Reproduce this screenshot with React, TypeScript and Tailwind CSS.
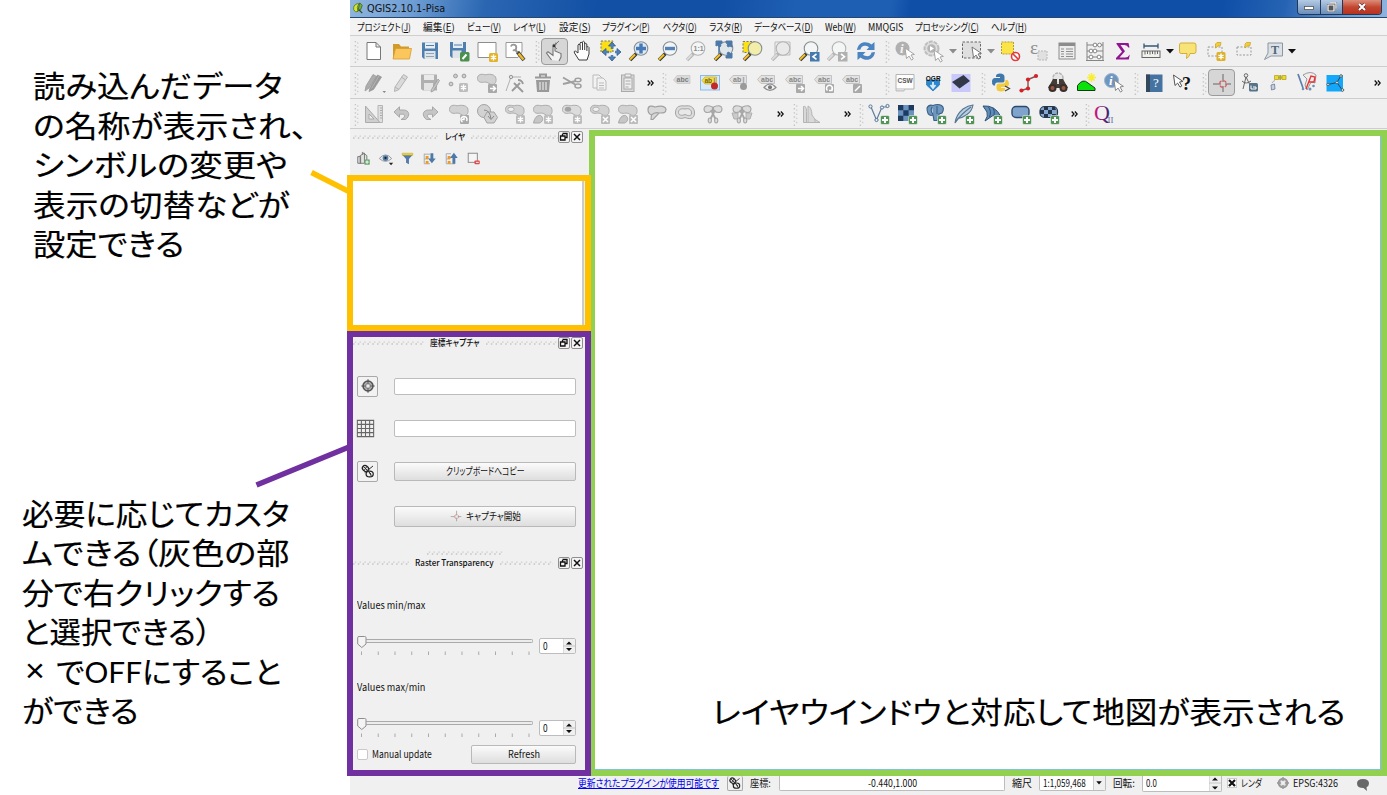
import React, { useLayoutEffect, useRef } from "react";

const JP = "font-['Noto_Sans_CJK_JP',sans-serif]";

/* Text squeezed or stretched horizontally to the width of its box. */
function Fit({ className, children }: { className: string; children: React.ReactNode }) {
  const outer = useRef<HTMLSpanElement>(null);
  const inner = useRef<HTMLSpanElement>(null);
  useLayoutEffect(() => {
    if (!outer.current || !inner.current) return;
    const s = outer.current.clientWidth / inner.current.offsetWidth;
    inner.current.style.transform = `scaleX(${s})`;
  }, []);
  return (
    <span ref={outer} className={"block shrink-0 whitespace-nowrap " + className}>
      <span ref={inner} className="inline-block origin-left">
        {children}
      </span>
    </span>
  );
}

/* ---------- icon parts ---------- */
const Star = ({ x = 13, y = 13, c = "#bcbcbc" }: { x?: number; y?: number; c?: string }) => (
  <g>
    <rect x={x} y={y} width="9" height="9" rx="1.5" fill={c} />
    <path
      d={`M${x + 4.5} ${y + 1.5}v6M${x + 1.9} ${y + 3}l5.2 3M${x + 1.9} ${y + 6}l5.2 -3`}
      stroke="#fff"
      strokeWidth="1.4"
    />
  </g>
);
const Cross = () => (
  <g>
    <rect x="13" y="13" width="9" height="9" rx="1" fill="#bcbcbc" />
    <path d="M15 15l5 5M20 15l-5 5" stroke="#fff" strokeWidth="1.5" />
  </g>
);
const Plus = () => (
  <g>
    <rect x="13.5" y="13.5" width="9" height="9" rx="1.5" fill="#4f9456" stroke="#fff" strokeWidth=".5" />
    <path d="M18 15v6M15 18h6" stroke="#fff" strokeWidth="2" />
  </g>
);
const Arr = ({ d = "M15 17.5h5M18 15l2.5 2.5L18 20" }: { d?: string }) => (
  <g>
    <rect x="13" y="13" width="9" height="9" rx="1" fill="#a9a9a9" />
    <path d={d} stroke="#fff" strokeWidth="1.5" fill="none" />
  </g>
);
const Mag = ({ gray = false, fill = "#f4f6f6", children }: { gray?: boolean; fill?: string; children?: React.ReactNode }) => (
  <g>
    <path d="M9.5 14.5L3 21" stroke={gray ? "#b5b5b5" : "#333"} strokeWidth="3.6" />
    <path d="M8 15.5L3 20.5" stroke={gray ? "#dadada" : "#f3c221"} strokeWidth="2.2" />
    <circle cx="14" cy="9.5" r="6.8" fill={fill} stroke={gray ? "#b2b2b2" : "#858f92"} strokeWidth="1.1" />
    {children}
  </g>
);
const Blob = ({ f = "#d2d2d2", hole = false }: { f?: string; hole?: boolean }) => (
  <g>
    <path
      d="M2.500 7.500C2.500 3.500 6 2.500 10 3.800C14 3 18.500 2.800 20.500 6C21.800 9 21 13 18 13.500C14 14 13.500 10.800 10 11C6 12 2.500 11 2.500 7.500Z"
      fill={f}
      stroke="#acacac"
      strokeWidth="1"
    />
    {hole && <ellipse cx="8" cy="7.300" rx="3.200" ry="2.200" fill="#efefef" stroke="#acacac" strokeWidth=".9" />}
  </g>
);
const Blob2 = () => <path d="M2.500 21C3.500 16 6 13 9.500 13.500C13 15.500 12 20 8.500 21Z" fill="#c6c6c6" stroke="#a6a6a6" />;
const Cursor = ({ x = 12, y = 9, f = "#fff", s = "#a5a5a5" }: { x?: number; y?: number; f?: string; s?: string }) => (
  <path d={`M${x} ${y}l1.500 10.500 2.600 -2.400 2.400 4 1.800 -1.200 -2.300 -3.900 3.400 -.6Z`} fill={f} stroke={s} strokeWidth="1" />
);
const Tag = ({ t = "abc" }: { t?: string }) => (
  <g>
    <path d="M2.500 8.500L6 4.500H19.500V12.500H6Z" fill="#e2e2e2" stroke="#b9b9b9" strokeWidth=".8" />
    <text x="6" y="11" fontSize="7" fontWeight="bold" fill="#868686" className="font-['Liberation_Sans',sans-serif]">
      {t}
    </text>
  </g>
);
const Scissors = () => (
  <g fill="#dcdcdc" stroke="#a6a6a6" strokeWidth="1.1">
    <path d="M11.500 9Q3 13 3 6.500 4 2 11.500 5ZM12.500 9Q21 13 21 6.500 20 2 12.500 5Z" />
    <path d="M14 8L9.500 17M10 8L14.500 17" strokeWidth="1.800" />
    <ellipse cx="8.800" cy="18.500" rx="1.600" ry="2.500" />
    <ellipse cx="15.200" cy="18.500" rx="1.600" ry="2.500" />
  </g>
);

const icons: Record<string, React.ReactNode> = {
  new: <path d="M5 3.500H14L18.500 8V20.500H5ZM14 3.500V8H18.500" fill="#fff" stroke="#777" />,
  open: (
    <g>
      <path d="M3 19V5H9L11 7.500H19V19Z" fill="#d29a2b" />
      <path d="M3 20L5.500 9.500H21.500L19.500 20Z" fill="#fbc75c" stroke="#d89d30" strokeWidth=".8" />
    </g>
  ),
  save: (
    <g>
      <path d="M4 3.500H20V20H6L4 18Z" fill="#4f7fae" />
      <rect x="7" y="3.500" width="10" height="6" fill="#e8edf1" />
      <path d="M8 6.500h8" stroke="#4f7fae" />
      <rect x="6.500" y="12" width="11" height="8" fill="#dfe4e8" />
      <path d="M8 14.500h8M8 17.500h8" stroke="#8ea4b8" />
    </g>
  ),
  saveAs: (
    <g>
      <path d="M3 3H19V19H5L3 17Z" fill="#4f7fae" />
      <rect x="6" y="3" width="10" height="6" fill="#e8edf1" />
      <path d="M7 6h8" stroke="#4f7fae" />
      <rect x="5.500" y="11.500" width="9" height="7.500" fill="#dfe4e8" />
      <rect x="13" y="13" width="9.500" height="9.500" rx="1.500" fill="#4c9050" />
      <path d="M15.500 20L19.500 15.500" stroke="#fff" strokeWidth="2" />
    </g>
  ),
  composer: (
    <g>
      <path d="M3 3.500H21V15L17 18.500H3Z" fill="#fff" stroke="#8d8d8d" />
      <Star x={14} y={14} c="#e3b32c" />
    </g>
  ),
  manager: (
    <g>
      <path d="M3 3.500H19V13L15 18.500H3Z" fill="#fff" stroke="#999" />
      <path d="M14.500 13l6.500 8" stroke="#444" strokeWidth="3.800" />
      <path d="M15.500 14.500l5 6" stroke="#efbc28" strokeWidth="2.400" />
      <circle cx="10.500" cy="8.500" r="2.800" stroke="#979797" strokeWidth="1.800" strokeDasharray="13 4.600" strokeDashoffset="8" />
      <path d="M12 10.500l2.500 3" stroke="#979797" strokeWidth="2" />
    </g>
  ),
  touch: (
    <g>
      <path d="M9.500 21L4.500 14l1.500-1.300L11 16.500V6q1-1.200 2 0V12l6 2.500V18l-2 4" fill="#f4f4f4" stroke="#777" strokeWidth="1.100" />
      <path d="M12 7l5-5M12 7l3 3" stroke="#777" />
      <circle cx="12" cy="7" r="1.300" fill="#333" />
      <circle cx="14" cy="4.500" r="1" fill="#777" />
    </g>
  ),
  pan: (
    <path
      d="M8 21L3.500 14q-1-2 .8-2L7 14V6q.8-1.800 2 0V4q1-1.800 2.300 0V3q1.200-1.500 2.300 0V5q1.200-1.300 2.200 0V8q1.500-1.200 2.200.5V15l-2 6Z M9.200 6v5M11.500 4v7M13.700 5v6M15.900 8v4"
      fill="#fff"
      stroke="#3d3d3d"
      strokeWidth="1"
    />
  ),
  panSel: (
    <g>
      <rect x="2" y="2" width="12" height="11" fill="#fbdf12" stroke="#777" strokeDasharray="2 1.500" />
      <path d="M13 3l3.500 4h-7ZM13 22l3.500-4h-7ZM3 13l4-3.500v7ZM22 13l-4-3.500v7Z" fill="#4d7fb8" stroke="#31598b" strokeWidth=".8" />
      <path d="M13 6v4M13 16v3M6 13h4M16 13h3" stroke="#4d7fb8" strokeWidth="2.500" />
    </g>
  ),
  zin: (
    <Mag fill="#dfe9f3">
      <path d="M14 4.500v10M9 9.500h10" stroke="#4779b6" strokeWidth="3.400" />
    </Mag>
  ),
  zout: (
    <Mag>
      <path d="M9 9.500h10" stroke="#5583b8" strokeWidth="3.400" />
    </Mag>
  ),
  z11: (
    <Mag gray>
      <text x="9.500" y="12" fontSize="7" fontWeight="bold" fill="#8a8a8a" className="font-['Liberation_Sans',sans-serif]">
        1:1
      </text>
    </Mag>
  ),
  zfull: (
    <g>
      <Mag fill="#dfe6ea" />
      <path d="M4 2h6v2l-2 1 1 2-2 1-1-2-2 1ZM14 2h6v6l-2-1-2 1-1-2 1-1-2-1ZM20 19h-6v-2l2-1-1-2 2-1 1 2 2-1Z" fill="#4e78a8" stroke="#4e78a8" />
      <path d="M7 6v9" stroke="#4e78a8" strokeWidth="1.500" />
    </g>
  ),
  zsel: (
    <g>
      <rect x="2" y="2.500" width="12" height="11" fill="#fbe016" stroke="#777" strokeDasharray="2 1.500" />
      <Mag fill="#f3edaa" />
    </g>
  ),
  zlayer: (
    <g>
      <path d="M6 3h15v13H6Z" fill="#eee" stroke="#bbb" />
      <Mag gray fill="#e9e9e9" />
    </g>
  ),
  zlast: (
    <g>
      <Mag />
      <rect x="13" y="13" width="9.500" height="9.500" fill="#4679ac" />
      <path d="M19.500 15l-3.500 2.700 3.500 2.700" stroke="#fff" strokeWidth="1.600" fill="none" />
    </g>
  ),
  znext: (
    <g>
      <Mag gray />
      <rect x="13" y="13" width="9.500" height="9.500" fill="#b0b0b0" />
      <path d="M16 15l3.500 2.700-3.500 2.700" stroke="#fff" strokeWidth="1.600" fill="none" />
    </g>
  ),
  refresh: (
    <g fill="#4b84c1">
      <path d="M3 11C4 3 12 1 17.500 5.500L20.500 3V11H12.500L15 8.300C11 5.500 7 7 6.500 10.500Z" />
      <path d="M21 13C20 21 12 23 6.500 18.500L3.500 21V13H11.500L9 15.700C13 18.500 17 17 17.500 13.500Z" />
    </g>
  ),
  info: (
    <g>
      <circle cx="9.500" cy="9.500" r="7" fill="#b0b0b0" />
      <text x="7" y="14" fontSize="13" fontStyle="italic" fontWeight="bold" fill="#f4f4f4" className="font-['Liberation_Serif',serif]">i</text>
      <Cursor x={12} y={9} />
    </g>
  ),
  gear: (
    <g>
      <circle cx="10.500" cy="9.500" r="7" fill="#dedede" stroke="#bdbdbd" strokeWidth="2" strokeDasharray="4 1" />
      <circle cx="10.500" cy="9.500" r="4.200" fill="#b4b4b4" />
      <path d="M9 7l4 2.500-4 2.500Z" fill="#fff" />
      <Cursor x={13} y={11} />
    </g>
  ),
  select: (
    <g>
      <rect x="2.500" y="3" width="18" height="16" fill="#dfdfdf" stroke="#686868" strokeDasharray="2.500 1.500" />
      <Cursor x={12} y={8} s="#777" />
    </g>
  ),
  deselect: (
    <g>
      <rect x="3.500" y="3" width="12" height="12" fill="#fbe44a" stroke="#b79e33" strokeDasharray="2 1" />
      <circle cx="17.500" cy="17.500" r="4" fill="#fff" stroke="#e03b3b" strokeWidth="1.600" />
      <path d="M15 15l5 5" stroke="#e03b3b" strokeWidth="1.600" />
    </g>
  ),
  eps: (
    <g>
      <text x="4" y="15" fontSize="19" fill="#8f8f8f" className="font-['Liberation_Serif',serif]">ε</text>
      <rect x="12" y="12" width="9" height="9" fill="#e0e0e0" stroke="#b8b8b8" strokeDasharray="2 1" />
    </g>
  ),
  table: (
    <g>
      <rect x="4" y="4" width="16" height="16" fill="#ececec" stroke="#8c8c8c" />
      <rect x="4" y="4" width="16" height="3" fill="#8c8c8c" />
      <path d="M6 10h3M11 10h7M6 12.500h3M11 12.500h7M6 15h3M11 15h7M6 17.500h3M11 17.500h7" stroke="#8f8f8f" />
    </g>
  ),
  abacus: (
    <g fill="#fff" stroke="#858585">
      <path d="M4 3v18M20 3v18M3 21.500h18M4 6h16M4 12h16M4 18h16" fill="none" />
      <circle cx="12" cy="6" r="1.900" /><circle cx="16.500" cy="6" r="1.900" />
      <circle cx="8" cy="12" r="1.900" /><circle cx="12" cy="12" r="1.900" />
      <circle cx="8" cy="18" r="1.900" /><circle cx="16" cy="18" r="1.900" />
    </g>
  ),
  sigma: <path d="M5.500 4H17.500L18.500 8.500H17.300Q16.500 6 13.500 6H9.500L14 12.200 8.500 18.500H14.500Q17.500 18 18.800 15.500L17.800 20.500H5V19L11 12.700 5.500 5Z" fill="#911491" />,
  measure: (
    <g>
      <path d="M5 7h14M5 4.500v5M19 4.500v5" stroke="#355775" strokeWidth="1.300" />
      <rect x="3" y="12" width="18" height="6.500" fill="#f2f2ed" stroke="#666" />
      <path d="M6 12v3.500M8.500 12v3M11 12v3.500M13.500 12v3M16 12v3.500M18.500 12v3" stroke="#666" />
    </g>
  ),
  tip: (
    <path d="M5 4H18Q20 4 20 6V12.500Q20 14.500 18 14.500H14Q13.500 18 10.500 19.500L11 14.500H5Q3.500 14.500 3.500 12.500V6Q3.500 4 5 4Z" fill="#f8e377" stroke="#d3ae3c" />
  ),
  bmNew: (
    <g>
      <path d="M4 8H18V17H4Z" fill="none" stroke="#999" strokeDasharray="2 1.500" />
      <path d="M11.500 9V5L13 3.500H17L16.500 6.500 14 7Z" fill="#f3cf35" stroke="#c59e21" strokeWidth=".7" />
      <Star x={12.500} y={13} c="#deb02b" />
    </g>
  ),
  bm: (
    <g>
      <path d="M5 8H19V16H5Z" fill="none" stroke="#999" strokeDasharray="2 1.500" />
      <path d="M13 9V5L14.500 3.500H18.500L18 6.500 15.500 7Z" fill="#f3cf35" stroke="#c59e21" strokeWidth=".7" />
    </g>
  ),
  annot: (
    <g>
      <path d="M6 4H20.500V17H9L2.500 20.500 6 14Z" fill="#dbe1e7" stroke="#8e979f" />
      <text x="9" y="14.500" fontSize="12" fontWeight="bold" fill="#526575" className="font-['Liberation_Serif',serif]">T</text>
    </g>
  ),
  pencils: (
    <g stroke="#9a9a9a" strokeWidth=".8">
      <path d="M4 15L11 3.500l3.500 2L7 17l-4 3Z" fill="#adadad" />
      <path d="M8 17L15.500 4l4 2L11.500 18.500l-4.500 2Z" fill="#999" />
      <path d="M9.500 17.500L17 5" stroke="#bdbdbd" />
      <path d="M20.500 20h3.500l-1.700 2Z" fill="#888" stroke="none" />
    </g>
  ),
  pencil: <path d="M5 16L13.500 3.500 17.500 6 9 18.500 4.500 20.500ZM5 16l4 2.500M11.500 6l4 3" fill="#dadada" stroke="#b3b3b3" />,
  saveG: (
    <g>
      <path d="M3 3.500H19V19.500H5L3 18Z" fill="#b0b0b0" />
      <rect x="6" y="4" width="10" height="5" fill="#eaeaea" />
      <rect x="6" y="12" width="9" height="7.500" fill="#e4e4e4" />
      <path d="M20 8l-6.500 10.500-.5 2.500 2.500-1L21.500 9.500Z" fill="#c4c4c4" stroke="#9c9c9c" strokeWidth=".8" />
    </g>
  ),
  pts: (
    <g fill="#cfcfcf" stroke="#9d9d9d">
      <circle cx="4" cy="13" r="1.900" /><circle cx="8.500" cy="5" r="1.900" /><circle cx="17" cy="5" r="1.900" />
      <g stroke="none"><Star x={12} y={12} /></g>
    </g>
  ),
  move: (<g><Blob /><Arr /></g>),
  node: (
    <g>
      <path d="M3 20L8 6H18" stroke="#b0b0b0" fill="none" />
      <circle cx="8" cy="6" r="1.700" fill="#ddd" stroke="#999" />
      <path d="M9 20L17 12M11 12l9 9M15 9q4 0 5 4" stroke="#9a9a9a" strokeWidth="1.900" />
    </g>
  ),
  trash: (
    <g>
      <path d="M5 9H19L18 21H6Z" fill="#999" />
      <path d="M4 6.500h16M9 5.500V3.500h6V5.500" stroke="#999" strokeWidth="2" fill="none" />
      <path d="M9 11v8M12 11v8M15 11v8" stroke="#e8e8e8" strokeWidth="1.200" />
    </g>
  ),
  cut: (
    <g stroke="#a0a0a0" fill="none" strokeWidth="1.500">
      <path d="M3 6.500L16 14M3 13L16 10" strokeWidth="2" />
      <ellipse cx="18" cy="15" rx="3" ry="2" />
      <ellipse cx="18" cy="9" rx="3" ry="1.700" />
    </g>
  ),
  copy: (
    <g fill="#f2f2f2" stroke="#bbb">
      <path d="M5 4h6l3 3v10H5Z" />
      <path d="M9 7h6l3 3v9H9Z" />
      <path d="M11 12h5M11 14.500h5M11 17h5" />
    </g>
  ),
  paste: (
    <g fill="#eee" stroke="#aaa">
      <rect x="5.500" y="4" width="12.500" height="16.500" fill="#d9d9d9" />
      <rect x="8" y="7" width="8" height="11" />
      <path d="M9 3h6v3H9ZM9.500 10h5M9.500 13h5M9.500 16h3" />
    </g>
  ),
  lab: (
    <g>
      <path d="M3.500 9L7 4.500H20V12.500H7Z" fill="#dadada" stroke="#c4c4c4" strokeWidth=".7" />
      <text x="6.500" y="11" fontSize="7" fontWeight="bold" fill="#7d7d7d" className="font-['Liberation_Sans',sans-serif]">abc</text>
    </g>
  ),
  labPin: (
    <g>
      <rect x="2.500" y="4.500" width="19" height="14.500" fill="#d8eafa" stroke="#8cbae7" />
      <path d="M4 9.500L7 6H18.500V13H7Z" fill="#f8df3c" stroke="#c7ab2b" strokeWidth=".7" />
      <text x="6.500" y="12" fontSize="6.500" fontWeight="bold" fill="#6d6424" className="font-['Liberation_Sans',sans-serif]">ab</text>
      <path d="M16.500 7v7" stroke="#999" strokeWidth="1.500" />
      <circle cx="16.500" cy="15" r="3.500" fill="#c22a2a" />
    </g>
  ),
  labPinG: (<g><Tag t="ab" /><path d="M16.500 6v8" stroke="#aaa" strokeWidth="1.500" /><circle cx="16.500" cy="15.500" r="3.500" fill="#9a9a9a" /></g>),
  labEye: (<g><Tag /><path d="M9 16.500q6-7 12 0-6 6-12 0Z" fill="#f0f0f0" stroke="#8c8c8c" strokeWidth="1.200" /><circle cx="15" cy="16.300" r="2" fill="#777" /></g>),
  labMove: (<g><Tag /><Arr /></g>),
  labRot: (<g><Tag /><Arr d="M15.500 19.500a3 3 0 1 1 4 0M20 16.500v3h-3" /></g>),
  labEdit: (<g><Tag /><Arr d="M15 20l5-5" /></g>),
  csw: (
    <g>
      <path d="M3 3.500h18v14.500H3Z" fill="#fdfdfd" stroke="#b4b4b4" />
      <path d="M3 18v2h8l1-2" fill="#ddd" stroke="#b4b4b4" strokeWidth=".8" />
      <text x="4.500" y="12" fontSize="6.500" fontWeight="bold" fill="#555" className="font-['Liberation_Sans',sans-serif]">CSW</text>
    </g>
  ),
  ogr: (
    <g>
      <path d="M5.500 9v5l6.500 6 6.500-6V9Z" fill="#2b87cf" stroke="#1b66a2" strokeWidth=".6" />
      <path d="M12 11v6M9.500 14l2.500 3 2.500-3" stroke="#d6ecfa" strokeWidth="1.800" fill="none" />
      <text x="4.800" y="10" fontSize="6.500" fontWeight="bold" fill="#111" className="font-['Liberation_Sans',sans-serif]">OGR</text>
    </g>
  ),
  black: (<g><rect x="2.500" y="3" width="19" height="18" fill="#c8c8fb" /><path d="M3 11L14.500 4 21 10 10.500 17.500Z" fill="#333848" /></g>),
  python: (
    <g>
      <path d="M11 2.500Q15.500 2.500 15.500 6V10Q15.500 11.500 13 11.500H8.500Q6 11.500 6 14.500H4.500Q2.500 13 3 10 3.500 7 6 7H11V6H7V5Q7 2.500 11 2.500Z" fill="#3e78ad" />
      <path d="M12 20.500Q7.500 20.500 7.500 17V14.500Q7.500 12.500 10 12.500H14Q16.500 12.500 16.500 9H18.500Q20.500 11 20 13.500 19.500 16 17 16H12V17H16V18Q16 20.500 12 20.500Z" fill="#f3cb3e" />
      <path d="M16 15l4.500 2.500-4.500 2.500" stroke="#444" strokeWidth="1.200" fill="none" />
    </g>
  ),
  road: (
    <g>
      <path d="M4 19.500L11 17.500V8.500L19.500 5" stroke="#8b4f50" fill="none" strokeWidth="1.400" />
      <g fill="#d42026"><circle cx="4.500" cy="19.500" r="2.100" /><circle cx="11" cy="17.500" r="2.100" /><circle cx="11" cy="8.500" r="2.100" /><circle cx="19" cy="5" r="2.100" /></g>
    </g>
  ),
  bino: (
    <g>
      <circle cx="12" cy="7" r="5" fill="#e6e6e6" stroke="#b4b4b4" strokeWidth="1.500" strokeDasharray="3 1" />
      <path d="M7 8h4v5h2V8h4l5 9H2Z" fill="#443d37" />
      <circle cx="6.500" cy="17" r="4" fill="#372f2b" /><circle cx="17.500" cy="17" r="4" fill="#372f2b" />
      <circle cx="6.500" cy="17" r="2" fill="#995548" /><circle cx="17.500" cy="17" r="2" fill="#995548" />
    </g>
  ),
  hill: (
    <g>
      <path d="M3.500 19.500V14.500Q9 7 14 12L21 17V19.500Z" fill="#0be20b" stroke="#143914" />
      <path d="M17.500 2v9M13 6.500h9M14.500 3.500l6 6M20.500 3.500l-6 6" stroke="#f9ed31" strokeWidth="1.500" />
    </g>
  ),
  infoB: (
    <g>
      <circle cx="9.500" cy="9.500" r="7" fill="#6f96c0" stroke="#9db4cc" />
      <text x="7" y="14" fontSize="13" fontStyle="italic" fontWeight="bold" fill="#fff" className="font-['Liberation_Serif',serif]">i</text>
      <Cursor x={12} y={9} s="#888" />
    </g>
  ),
  help: (
    <g>
      <rect x="4" y="3.500" width="16.500" height="17.500" fill="#4473a1" />
      <rect x="4" y="3.500" width="4" height="17.500" fill="#33485c" />
      <text x="11" y="16" fontSize="13" fill="#fff" className="font-['Liberation_Serif',serif]">?</text>
    </g>
  ),
  what: (
    <g>
      <Cursor x={3.500} y={4} s="#555" />
      <text x="12" y="19" fontSize="18" fontWeight="bold" fill="#111" className="font-['Liberation_Serif',serif]">?</text>
    </g>
  ),
  crossR: (
    <g>
      <path d="M13 3v8M13 15v6M3 13h8M15 13h6" stroke="#666" />
      <circle cx="13" cy="13" r="3.500" fill="none" stroke="#dc5b5b" strokeDasharray="3.500 2" strokeWidth="1.300" />
    </g>
  ),
  compass: (
    <g>
      <circle cx="8" cy="4.500" r="1.800" fill="none" stroke="#666" />
      <path d="M8 6L5 18M8 6l4 8M4 10q4 4 9 0" stroke="#666" fill="none" />
      <rect x="11" y="12" width="9" height="8.500" rx="1.500" fill="#567288" />
      <path d="M13 14.500v3.500h5v-2h-3" stroke="#fff" fill="none" />
    </g>
  ),
  sat: (
    <g>
      <path d="M8.500 4.500h4v4h-4ZM16 4.500h4v4h-4Z" fill="#eddb29" stroke="#aa9a25" strokeWidth=".7" />
      <path d="M12 6.500h4M14.200 4v5" stroke="#b9aa25" strokeWidth="1.800" />
      <path d="M6 12q1-2 3-2.500" stroke="#aaa" fill="none" />
      <path d="M5 14l3.500-1 .5 5-3.500 1Z" fill="#b9d3ea" stroke="#778" strokeWidth=".8" />
    </g>
  ),
  clip: (
    <g>
      <path d="M3 3L8 17" stroke="#5d7fae" strokeWidth="1.700" />
      <path d="M8 4q8-5 13 0l-1 8q-4-2-5 1l-3 6-2-5 2-6Z" fill="#eee" stroke="#999" />
      <path d="M11 18L16 5l4 1-1 5-5 0" stroke="#ea3333" strokeWidth="1.400" fill="none" />
      <circle cx="8" cy="18" r="1.300" fill="#6d91bb" /><circle cx="15" cy="18" r="1.500" fill="#6d91bb" /><circle cx="18.500" cy="15" r="1.300" fill="#6d91bb" />
    </g>
  ),
  voronoi: (
    <g>
      <rect x="3.500" y="4" width="16.500" height="16.500" fill="#14a8fb" />
      <path d="M18 4.500L14 11.500 5 13.500M14 11.500l5.500 8" stroke="#23435c" strokeWidth="1" fill="none" />
      <g fill="#eee" stroke="#566"><circle cx="18" cy="5" r="1.300" /><circle cx="14" cy="11.500" r="1.300" /><circle cx="5" cy="13.500" r="1.200" /><circle cx="19.500" cy="19" r="1.300" /></g>
    </g>
  ),
  setsq: (
    <g>
      <path d="M3.500 4V20.500H18Z M7 12v5h5Z" fill="#cfcfcf" stroke="#ababab" fillRule="evenodd" />
      <path d="M16 3.500H20.500V20.500H18L16 18Z" fill="#e0e0e0" stroke="#b5b5b5" />
      <path d="M18 6h2M18 8.500h2M18 11h2M18 13.500h2M18 16h2" stroke="#aaa" />
    </g>
  ),
  undo: <path d="M4 10L9.500 4.800V8H13.500C19.500 8 20.500 14 15.500 17.500L11 17.500C16 15 15.500 12.200 12.500 12.200H9.500V15.200Z" fill="#c6c6c6" stroke="#a3a3a3" strokeWidth=".9" />,
  redo: <path d="M20 10L14.500 4.800V8H10.500C4.500 8 3.500 14 8.500 17.500L13 17.500C8 15 8.500 12.200 11.500 12.200H14.500V15.200Z" fill="#c6c6c6" stroke="#a3a3a3" strokeWidth=".9" />,
  rot: (<g><Blob /><Arr d="M15.500 20a3 3 0 1 1 4-1M17 15.500v2h-2" /></g>),
  simp: (
    <g fill="#d2d2d2" stroke="#a3a3a3">
      <circle cx="9" cy="9" r="6.500" />
      <path d="M12 10h7l3.500 5.500-3.500 5.500h-7L9 15.500Z" />
      <path d="M9 8Q15 8 16 17M13 14l3 3.500 3-3.500" stroke="#8a8a8a" fill="none" />
    </g>
  ),
  ring: (<g><Blob hole /><Star /></g>),
  part: (<g><Blob /><Blob2 /><Star /></g>),
  fill: (<g><Blob f="#dcdcdc" /><ellipse cx="8" cy="7.300" rx="3.200" ry="2.500" fill="#a3a3a3" /><Star /></g>),
  delRing: (<g><Blob hole /><Cross /></g>),
  delPart: (<g><Blob /><Blob2 /><Cross /></g>),
  reshape: (
    <path
      d="M3 7.500C3 3.500 7 3.500 10 5 14 4 20 3.500 21 7.500 21 11.500 17 11 14 11L8 17.500 6 17.500 6.500 13Q3 11.500 3 7.500ZM6.500 13Q10 9.500 14 11"
      fill="#d8d8d8"
      stroke="#a0a0a0"
      strokeWidth="1.200"
    />
  ),
  offset: (
    <g fill="#dcdcdc" stroke="#a3a3a3"><path d="M2.500 11C2.500 3.500 8 3.500 12 4 17 3 21.500 5 21.500 11 21.500 18 15 17 12 15.500 8 17.500 2.500 16 2.500 11Z" /><path d="M5.500 10.500C5.500 6.500 9 6.500 12 7 16 6 18.500 7.500 18.500 11 18.500 14.500 15 14 12 12.500 9 14 5.500 13.500 5.500 10.500Z" fill="#e8e8e8" /></g>
  ),
  split: <Scissors />,
  splitP: (<g><path d="M2 11h6v6H4ZM22 11h-6v6h4Z" fill="#cacaca" stroke="#b0b0b0" /><Scissors /></g>),
  hist: <path d="M3.500 20.500V4.500q3-1 3 5V20.500M8 20.500V4q3.500 1 4 9 2 5 8 7.500H3.500M15 17v3" fill="#d9d9d9" stroke="#b5b5b5" strokeWidth="1" />,
  vec: (
    <g>
      <path d="M4 5L9.500 18 15 5h6" stroke="#5e7d9b" strokeWidth="1.200" fill="none" />
      <g fill="#e8eef3" stroke="#557795"><circle cx="3.500" cy="4.500" r="1.600" /><circle cx="9.500" cy="18" r="1.600" /><circle cx="15" cy="5.500" r="1.600" /><circle cx="20.500" cy="4" r="1.600" /></g>
      <Plus />
    </g>
  ),
  raster: (
    <g>
      <rect x="3" y="3" width="16" height="16" fill="#1d3a5f" />
      <path d="M8.300 3h5.300v5.300H8.300ZM3 8.300h5.300v5.400H3ZM13.600 8.300H19v5.400h-5.400ZM8.300 13.700h5.300V19H8.300Z" fill="#6a93bf" />
      <Plus />
    </g>
  ),
  pg: (
    <g>
      <path d="M3 6Q5 2 9 3.500 14 1.500 17.500 3.500 21 6 18 11L15 12V15L13 18.500H10L9 13 7 13.500Q3 13 3 6ZM8 5Q6 9 9 12M13 4v8" fill="#6e97c0" stroke="#3a5f85" strokeWidth="1.100" />
      <Plus />
    </g>
  ),
  feather: (<g><path d="M3 21Q4 13 11 7 16 3.500 21 3 20 9 15 12.500 10 16 6 16.500ZM3 21Q9 12 19 5" fill="#b9cfe2" stroke="#567693" strokeWidth="1.100" /><Plus /></g>),
  mssql: (<g><path d="M3 4Q15 3 20.500 14L20 18 13 13.500 5 19Q8.500 14 7 10ZM8 4.500Q12 9 9.500 15M13 6Q15 9 14 13" fill="#5f8cb9" stroke="#2e4f73" /><Plus /></g>),
  oracle: (<g><rect x="3" y="4.500" width="17" height="11" rx="4" fill="#7fa3cd" stroke="#29496d" strokeWidth="1.400" /><Plus /></g>),
  georaster: (
    <g>
      <rect x="3" y="4.500" width="17.500" height="11" rx="4.500" fill="#86a8cf" stroke="#25384f" strokeWidth="1.200" />
      <path d="M7 5h4v3H7ZM15 5h3l1 3h-4ZM3 8h4v4H3ZM11 8h4v4h-4ZM7 12h4v3H7ZM15 12h4l-1 3h-3Z" fill="#22354d" />
      <Plus />
    </g>
  ),
  qii: (
    <g>
      <text x="1" y="18" fontSize="22" fill="url(#q)" className="font-['Liberation_Serif',serif]">Q</text>
      <text x="14.500" y="21" fontSize="9" fill="#6c6ca0" className="font-['Liberation_Serif',serif]">II</text>
      <defs><linearGradient id="q"><stop offset="0" stopColor="#e0107f" /><stop offset="1" stopColor="#2c2673" /></linearGradient></defs>
    </g>
  ),
  addGroup: (<g><path d="M6 10h3v7H6ZM8.500 9L13 6.500V17H8.500ZM10.800 8V5.500L15.500 9v5" fill="#e3e3e3" stroke="#777" /><rect x="13" y="13" width="5.500" height="5.500" fill="#6ba672" /><path d="M15.700 14v3.500M14 15.700h3.500" stroke="#fff" /></g>),
  eye: (<g><path d="M5.500 12q6.500-7.500 13 0-6.500 6-13 0Z" fill="#eee" stroke="#999" /><circle cx="12" cy="11.500" r="3" fill="#5581ad" /><circle cx="12" cy="11.500" r="1.200" fill="#222" /><path d="M15.500 16.500h4.500l-2.200 2.500Z" fill="#222" /></g>),
  funnel: (<g><path d="M6.500 8h11l-4 4.500V18l-3-1.500v-4Z" fill="#527ba7" /><path d="M6.500 6.500h11v2h-11Z" fill="#ecd744" stroke="#c5ac2b" strokeWidth=".6" /></g>),
  expand: (<g><path d="M6.500 7v10.500M6.500 7.500h6M6.500 12.500h4M6.500 17.500h6" stroke="#aaa" /><path d="M8 9.500h3v3H8ZM8 14.500h3v3H8Z" fill="#f09a23" /><path d="M13 6.500h3v5.500h2.500L14.500 17 10.500 12H13Z" fill="#4b79aa" /></g>),
  collapse: (<g><path d="M6.500 7v10.500M6.500 7h5M6.500 12.500h4M6.500 17.500h9" stroke="#aaa" /><path d="M8 9.500h3v3H8ZM8 14.500h3v3H8Z" fill="#f09a23" /><path d="M13 17.500h3v-6h2.500L14.500 6 10.500 11.500H13Z" fill="#4b79aa" /></g>),
  remove: (<g><rect x="6.500" y="6.500" width="9.500" height="9.500" fill="#f5f5f5" stroke="#888" /><rect x="13" y="14" width="5.500" height="4" rx="1" fill="#e0464a" /><path d="M14.500 16h3" stroke="#fff" /></g>),
  globe: (<g><circle cx="12" cy="12" r="5.800" fill="#ccc" stroke="#555" strokeWidth="2.200" /><path d="M12 4v16M4 12h16" stroke="#555" strokeWidth="1.300" /><rect x="9.500" y="9.500" width="5" height="5" fill="#eee" stroke="#666" /></g>),
  globeG: (<g><circle cx="12" cy="12" r="5.800" fill="#ccc" stroke="#999" strokeWidth="2.600" /><path d="M12 4v16M4 12h16" stroke="#999" strokeWidth="1.800" /><rect x="9.500" y="9.500" width="5" height="5" fill="#f0f0f0" /></g>),
  grid: (<path d="M3.500 3.500h17v17h-17ZM7.700 3v18M12 3v18M16.300 3v18M3 7.700h18M3 12h18M3 16.300h18" fill="none" stroke="#666" strokeWidth="1.100" />),
  mouse: (<g><ellipse cx="9" cy="9" rx="4" ry="3.300" fill="#ddd" stroke="#222" strokeWidth="1.500" transform="rotate(40 9 9)" /><ellipse cx="14" cy="15.500" rx="4.300" ry="3.500" fill="#eee" stroke="#222" strokeWidth="1.500" /><path d="M6 6l10 10M11 6l-4 6M8 14l10-8M13 13l3 5" stroke="#333" strokeWidth="1.200" /></g>),
};

const Icon = ({ n, className = "h-6 w-6" }: { n: string; className?: string }) => (
  <svg viewBox="0 0 24 24" className={"shrink-0 overflow-visible " + className} fill="none">
    {icons[n]}
  </svg>
);

/* ---------- toolbar parts ---------- */
const Slot = ({ n }: { n: string }) => (
  <span className="flex w-[28.3px] shrink-0 justify-center">
    <Icon n={n} />
  </span>
);
const Pressed = ({ n }: { n: string }) => (
  <span className="flex w-[28.3px] shrink-0 justify-center">
    <span className="flex h-[27px] w-[27px] items-center justify-center rounded-sm border border-[#9b9b9b] bg-[#d6d6d6]">
      <Icon n={n} />
    </span>
  </span>
);
const Handle = () => (
  <svg viewBox="0 0 6 24" className="h-6 w-[5.5px] shrink-0">
    <path d="M1.500 1v24" stroke="#c4c4c4" strokeWidth="1.500" strokeDasharray="1.500 3" />
    <path d="M4 2.500v24" stroke="#cfcfcf" strokeWidth="1.500" strokeDasharray="1.500 3" />
  </svg>
);
const Caret = ({ dark = false, className = "w-2.5" }: { dark?: boolean; className?: string }) => (
  <span className={"flex shrink-0 justify-center " + className}>
    <svg viewBox="0 0 8 5" className="h-[5px] w-2 shrink-0">
      <path d="M0 0h8L4 4.500Z" fill={dark ? "#111" : "#8c8c8c"} />
    </svg>
  </span>
);
const More = ({ className }: { className: string }) => (
  <span className={"flex shrink-0 justify-center " + className}>
    <svg viewBox="0 0 7 6" className="h-1.5 w-[7px] shrink-0">
      <path d="M.7.5L3 3 .7 5.500M3.900.5L6.200 3 3.900 5.500" stroke="#111" strokeWidth="1.300" fill="none" />
    </svg>
  </span>
);

const menus: [string, string, string][] = [
  ["プロジェクト", "J", "w-[54px]"],
  ["編集", "E", "w-[31.5px]"],
  ["ビュー", "V", "w-[34px]"],
  ["レイヤ", "L", "w-[33px]"],
  ["設定", "S", "w-[31.5px]"],
  ["プラグイン", "P", "w-[48px]"],
  ["ベクタ", "O", "w-[33.5px]"],
  ["ラスタ", "R", "w-[33px]"],
  ["データベース", "D", "w-[59px]"],
  ["Web", "W", "w-[30.5px]"],
  ["MMQGIS", "", "w-[35px]"],
  ["プロセッシング", "C", "w-[63.5px]"],
  ["ヘルプ", "H", "w-[35.5px]"],
];

/* ---------- dock parts ---------- */
const Dots = ({ className }: { className: string }) => (
  <svg className={"h-1 shrink-0 " + className}>
    <path d="M0 3h400" stroke="#c3c3c3" strokeWidth="1.500" strokeDasharray="1.500 3.300" />
    <path d="M1.700 1.200h400" stroke="#cecece" strokeWidth="1.300" strokeDasharray="1.500 3.300" />
  </svg>
);
const DockButtons = () => (
  <span className="ml-auto flex gap-px">
    <svg viewBox="0 0 12 12" className="h-3 w-3">
      <rect x=".5" y=".5" width="11" height="11" rx="1.500" fill="#f4f4f4" stroke="#8f8f8f" />
      <path d="M4.500 2.500h4.500v4h-1.500M2.500 5h4.500v4h-4.500Z M4.500 3v2" fill="none" stroke="#111" strokeWidth="1.300" />
    </svg>
    <svg viewBox="0 0 12 12" className="h-3 w-3">
      <rect x=".5" y=".5" width="11" height="11" rx="1.500" fill="#f4f4f4" stroke="#8f8f8f" />
      <path d="M3 3l6 6M9 3l-6 6" stroke="#111" strokeWidth="1.500" />
    </svg>
  </span>
);
const DockTitle = ({ text, w, left, right, className }: { text: string; w: string; left: string; right: string; className: string }) => (
  <div className={"flex h-3 shrink-0 items-center pl-[3px] pr-[6px] " + className}>
    <Dots className={left} />
    <Fit className={"mx-1.5 text-[9px] leading-3 font-medium " + w}>{text}</Fit>
    <Dots className={right} />
    <DockButtons />
  </div>
);
const Field = () => <span className="h-[17px] w-[182px] rounded-xs border border-[#bdbdbd] bg-white" />;
const PushButton = ({ className, children }: { className: string; children: React.ReactNode }) => (
  <button
    className={"flex shrink-0 items-center justify-center rounded-xs border border-[#b9b9b9] bg-linear-to-b from-[#fbfbfb] to-[#dedede] " + className}
  >
    {children}
  </button>
);
const ToolButton = ({ n }: { n: string }) => (
  <span className="flex h-[21px] w-[21px] items-center justify-center rounded-xs border border-[#a9a9a9] bg-[#f2f2f2]">
    <Icon n={n} className="h-5 w-5" />
  </span>
);
const Spin = () => (
  <span className="flex h-4 w-[37px] shrink-0 items-center rounded-xs border border-[#bdbdbd] bg-white">
    <Fit className="ml-[3px] w-[4.5px] text-[10px] leading-4">0</Fit>
    <svg viewBox="0 0 12 14" className="ml-auto h-3.5 w-3 bg-[#f0f0f0]">
      <path d="M0 0v14M0 7h12" stroke="#c6c6c6" />
      <path d="M3 5.500h6L6 2.500ZM3 9h6L6 12Z" fill="#111" />
    </svg>
  </span>
);
const Slider = () => (
  <div className="flex h-6 shrink-0 items-center gap-1.5 pl-[7px]">
    <svg viewBox="0 0 176 24" className="h-6 w-44 shrink-0">
      <rect x="8" y="5.500" width="168" height="3" rx="1.500" fill="#ececec" stroke="#aaa" />
      <path d="M.7 3.500Q.7 2.500 2 2.500H7.500Q9 2.500 9 3.500V10L4.800 13.500.7 10Z" fill="#f4f4f4" stroke="#8d8d8d" />
      {Array.from({ length: 11 }, (_, i) => (
        <path key={i} d={`M${4.500 + i * 16.750} 17.500v3.500`} stroke="#aaa" />
      ))}
    </svg>
    <Spin />
  </div>
);

const noteA: [string, string][] = [
  ["読み込んだデータ", "w-[250px]"],
  ["の名称が表示され、", "w-[274px]"],
  ["シンボルの変更や", "w-[255px]"],
  ["表示の切替などが", "w-[257px]"],
  ["設定できる", "w-[151px]"],
];
const noteB: [string, string][] = [
  ["必要に応じてカスタ", "w-[268px]"],
  ["ムできる（灰色の部", "w-[267px]"],
  ["分で右クリックする", "w-[258px]"],
  ["と選択できる）", "w-[190px]"],
];

export default function App() {
  return (
    <div className={"relative flex h-[795px] w-[1387px] overflow-hidden bg-white text-[#111] [font-feature-settings:'palt'] " + JP}>
      <aside className="flex w-[350px] shrink-0 flex-col pt-[65px] text-[30px] leading-[39.5px] text-black [-webkit-text-stroke:0.2px_#000]">
        <div className="pl-[33px]">
          {noteA.map(([t, w]) => (
            <Fit key={t} className={w}>{t}</Fit>
          ))}
        </div>
        <div className="mt-[230px] pl-[22px]">
          {noteB.map(([t, w]) => (
            <Fit key={t} className={w}>{t}</Fit>
          ))}
          <div className="flex h-[39.5px] pl-[3px]">
            <span className="w-[31px] shrink-0 font-['Liberation_Sans',sans-serif] text-[34px] [-webkit-text-stroke:0]">×</span>
            <Fit className="w-[225px]">
              で<span className="font-['Lato',sans-serif] text-[29px] [-webkit-text-stroke:0]">OFF</span>にすること
            </Fit>
          </div>
          <Fit className="w-[117px]">ができる</Fit>
        </div>
      </aside>

      <main className="flex w-[1037px] shrink-0 flex-col bg-[#f0f0f0]">
        <header className="flex h-[18px] shrink-0 items-start border-b border-[#26486f] bg-[linear-gradient(100deg,#8fb5df_0%,#6f9ed4_6%,#2a66b2_13%,#1250a5_24%,#1250a6_36%,#1f5fb3_43%,#1f5fb3_52%,#0f4fa8_54%,#0f4fa8_84%,#2663b3_90%,#6e9bd0_96%,#8fb4de_100%)] pl-0.5">
          <svg viewBox="0 0 14 14" className="mt-0.5 h-3 w-3 shrink-0">
            <path d="M6 2Q1 4 2 9 4 13 7 11 5 6 8 2Z" fill="#d8e627" stroke="#4d7a22" />
            <path d="M9 1l3 3-2 5-3 1Z" fill="#77ae35" stroke="#3e661f" />
            <path d="M8 9l4 4" stroke="#364d22" strokeWidth="1.500" />
          </svg>
          <Fit className="ml-[3px] w-[78px] text-[10px] leading-[17px] font-['DejaVu_Sans',sans-serif]">QGIS2.10.1-Pisa</Fit>
          <div className="mr-[5px] ml-auto flex h-[15px] overflow-hidden rounded-b border border-t-0 border-[#22385a]">
            <span className="flex w-[23px] items-center justify-center border-r border-[#22385a] bg-linear-to-b from-[#b4cae4] to-[#6b8fb9]">
              <svg viewBox="0 0 10 8" className="h-2 w-2.5"><rect x=".5" y="3.500" width="9" height="3" fill="#fff" stroke="#555" strokeWidth=".8" /></svg>
            </span>
            <span className="flex w-[22px] items-center justify-center border-r border-[#22385a] bg-linear-to-b from-[#b4cae4] to-[#6b8fb9]">
              <svg viewBox="0 0 10 10" className="h-2.5 w-2.5"><path d="M3 .8h6v6M1 3h6v6H1ZM3 5h2v2H3Z" fill="none" stroke="#555" strokeWidth="2" /><path d="M3 .8h6v6M1 3h6v6H1Z" fill="none" stroke="#fff" strokeWidth="1.200" /></svg>
            </span>
            <span className="flex w-[38px] items-center justify-center bg-linear-to-b from-[#dc8d7c] via-[#c34630] to-[#b7321f]">
              <svg viewBox="0 0 10 8" className="h-2 w-2.5"><path d="M2 1l6 6M8 1l-6 6" stroke="#5a3030" strokeWidth="3.200" /><path d="M2 1l6 6M8 1l-6 6" stroke="#fff" strokeWidth="2" /></svg>
            </span>
          </div>
        </header>

        <nav className="flex h-[18px] shrink-0 items-center gap-[12.3px] border-b border-[#cfcfcf] bg-[#f3f3f3] pl-[7px] text-[10px] leading-[15px]">
          {menus.map(([t, k, w]) => (
            <Fit key={t} className={w}>
              {t}
              {k && <>(<u>{k}</u>)</>}
            </Fit>
          ))}
        </nav>

        <div className="flex h-[31px] shrink-0 items-center border-b border-[#cdcdcd] pl-1">
          <Handle />
          {["new", "open", "save", "saveAs", "composer", "manager"].map((n) => <Slot key={n} n={n} />)}
          <span className="w-[5.5px]" />
          <Handle />
          <Pressed n="touch" />
          {["pan", "panSel", "zin", "zout", "z11", "zfull", "zsel", "zlayer", "zlast", "znext", "refresh"].map((n) => <Slot key={n} n={n} />)}
          <span className="w-[5.6px]" />
          <Handle />
          <Slot n="info" />
          <Slot n="gear" />
          <Caret />
          <Slot n="select" />
          <Caret />
          {["deselect", "eps", "table", "abacus", "sigma", "measure"].map((n) => <Slot key={n} n={n} />)}
          <Caret dark className="w-[8px]" />
          {["tip", "bmNew", "bm"].map((n) => <Slot key={n} n={n} />)}
          <span className="w-px" />
          <Slot n="annot" />
          <Caret dark className="w-[8px]" />
        </div>

        <div className="flex h-8 shrink-0 items-center border-b border-[#cdcdcd] pl-1">
          <Handle />
          {["pencils", "pencil", "saveG", "pts", "move", "node", "trash", "cut", "copy", "paste"].map((n) => <Slot key={n} n={n} />)}
          <More className="w-[17px]" />
          <span className="w-[3px]" />
          <Handle />
          {["lab", "labPin", "labPinG", "labEye", "labMove", "labRot", "labEdit"].map((n) => <Slot key={n} n={n} />)}
          <span className="w-[19px]" />
          <Handle />
          {["csw", "ogr", "black"].map((n) => <Slot key={n} n={n} />)}
          <span className="w-[6px]" />
          <Handle />
          {["python", "road", "bino", "hill", "infoB"].map((n) => <Slot key={n} n={n} />)}
          <span className="w-[5.500px]" />
          <Handle />
          <Slot n="help" />
          <Slot n="what" />
          <span className="w-[6px]" />
          <Handle />
          <Pressed n="crossR" />
          {["compass", "sat", "clip", "voronoi"].map((n) => <Slot key={n} n={n} />)}
          <More className="mr-[5px] ml-auto w-[9px]" />
        </div>

        <div className="flex h-[30px] shrink-0 items-center border-b border-[#cdcdcd] pl-1">
          <Handle />
          {["setsq", "undo", "redo", "rot", "simp", "ring", "part", "fill", "delRing", "delPart", "reshape", "offset", "split", "splitP"].map((n) => (
            <Slot key={n} n={n} />
          ))}
          <More className="ml-[18px] w-[14px]" />
          <span className="w-[5px]" />
          <Handle />
          <Slot n="hist" />
          <More className="ml-[14px] w-[14px]" />
          <span className="w-[5px]" />
          <Handle />
          {["vec", "raster", "pg", "feather", "mssql", "oracle", "georaster"].map((n) => <Slot key={n} n={n} />)}
          <More className="ml-[4px] w-[14px]" />
          <span className="w-[4px]" />
          <Handle />
          <Slot n="qii" />
        </div>

        <div className="flex h-[647px] shrink-0">
          <section className="flex w-[239px] shrink-0 flex-col">
            <DockTitle text="レイヤ" w="w-5" left="w-[86px]" right="w-[87px]" className="mt-0.5" />
            <div className="mt-0.5 flex h-[26px] shrink-0 items-center pl-0.5">
              {["addGroup", "eye", "funnel", "expand", "collapse", "remove"].map((n) => (
                <span key={n} className="flex w-[22px] shrink-0 justify-center">
                  <Icon n={n} className="-mx-0.5 h-[23px] w-[23px]" />
                </span>
              ))}
            </div>
            <div className="mt-1 ml-[3px] h-[156px] w-[231px] shrink-0 border-r-2 border-[#cbcbcb] bg-white" />
            <DockTitle text="座標キャプチャ" w="w-[50px]" left="w-[71px]" right="w-[72px]" className="mt-1.5" />
            <div className="mt-4 flex h-[42px] shrink-0 items-center gap-4 pl-[7px]"><ToolButton n="globe" /><Field /></div>
            <div className="flex h-[42px] shrink-0 items-center gap-4 pl-[7px]">
              <span className="flex w-[21px]"><Icon n="grid" className="-ml-[3px] h-[23px] w-[23px]" /></span>
              <Field />
            </div>
            <div className="flex h-11 shrink-0 items-center gap-4 pl-[7px]">
              <ToolButton n="mouse" />
              <PushButton className="h-[19px] w-[182px]"><Fit className="w-[78px] text-[10px] leading-4">クリップボードへコピー</Fit></PushButton>
            </div>
            <div className="flex h-[46px] shrink-0 items-center pl-11">
              <PushButton className="h-[21px] w-[182px] gap-[3px]">
                <Icon n="crossR" className="h-3.5 w-3.5 opacity-80" />
                <Fit className="w-[55px] text-[10px] leading-4">キャプチャ開始</Fit>
              </PushButton>
            </div>
            <div className="mt-2.5 flex h-2 shrink-0 items-center pl-[77px]"><Dots className="w-[76px]" /></div>
            <DockTitle text="Raster Transparency" w="w-[79px]" left="w-[56px]" right="w-[53px]" className="" />
            <Fit className="mt-7 ml-[7px] h-4 w-[68px] text-[10px] leading-4">Values min/max</Fit>
            <div className="mt-[21px]"><Slider /></div>
            <Fit className="mt-[21px] ml-[7px] h-4 w-[68px] text-[10px] leading-4">Values max/min</Fit>
            <div className="mt-[21px]"><Slider /></div>
            <div className="mt-1 flex h-5 shrink-0 items-center pl-[7px]">
              <span className="h-[11px] w-[11px] rounded-xs border border-[#c9c9c9] bg-white" />
              <Fit className="ml-1 w-[60px] text-[10px] leading-4">Manual update</Fit>
              <PushButton className="ml-[39px] h-[19px] w-[105px]"><Fit className="w-8 text-[10px] leading-4">Refresh</Fit></PushButton>
            </div>
          </section>
          <section className="mt-[7px] mr-1.5 mb-1.5 flex flex-1 items-end justify-end border-r border-b border-[#7ec0ee] bg-white pr-[34px] pb-[39px] text-black">
            <Fit className="w-[634px] text-[30px] leading-[40px] [-webkit-text-stroke:0.2px_#000]">レイヤウインドウと対応して地図が表示される</Fit>
          </section>
        </div>

        <footer className="flex h-[19px] shrink-0 items-start pl-[228px] text-[10px] leading-[14px]">
          <Fit className="w-[141px] text-[#0000ee]"><u>更新されたプラグインが使用可能です</u></Fit>
          <span className="ml-[8px] flex h-[15px] w-4 items-center justify-center rounded-xs border border-t-0 border-[#aaa]"><Icon n="mouse" className="h-[18px] w-[18px]" /></span>
          <Fit className="ml-[7px] w-[21px]">座標:</Fit>
          <span className="ml-[8px] flex h-[15px] w-[226px] justify-center rounded-b-xs border border-t-0 border-[#bdbdbd] bg-white"><Fit className="w-[49px]">-0.440,1.000</Fit></span>
          <Fit className="ml-[7px] w-5">縮尺</Fit>
          <span className="ml-[7px] flex h-[15px] w-[67px] rounded-b-xs border border-t-0 border-[#bdbdbd] bg-white pl-[3px]">
            <Fit className="w-[43px]">1:1,059,468</Fit>
            <span className="ml-auto flex w-3 items-center border-l border-[#ccc] bg-[#f0f0f0]"><svg viewBox="0 0 12 6" className="h-1.5 w-3"><path d="M2.500 1h6L5.500 4.500Z" fill="#111" /></svg></span>
          </span>
          <Fit className="ml-[7px] w-[22px]">回転:</Fit>
          <span className="ml-[7px] flex h-4 w-20 rounded-b-xs border border-t-0 border-[#bdbdbd] bg-white pl-[3px]">
            <Fit className="w-[11px]">0.0</Fit>
            <svg viewBox="0 0 12 15" className="ml-auto h-[15px] w-3 bg-[#f0f0f0]"><path d="M0 0v15M0 7h12" stroke="#c6c6c6" /><path d="M3 4.500h6L6 1.500ZM3 10.500h6L6 13.500Z" fill="#111" /></svg>
          </span>
          <svg viewBox="0 0 10 10" className="mt-0.5 ml-[5px] h-2.5 w-2.5 shrink-0"><rect x=".5" y=".5" width="9" height="9" fill="#fff" stroke="#ccc" /><path d="M2 2l6 6M8 2L2 8" stroke="#111" strokeWidth="2.200" /></svg>
          <Fit className="ml-1 w-[21px]">レンダ</Fit>
          <Icon n="globeG" className="-mt-0.5 ml-[12px] h-[18px] w-[18px]" />
          <Fit className="ml-px w-[45px]">EPSG:4326</Fit>
          <svg viewBox="0 0 14 14" className="mt-0.5 ml-[18px] h-3.5 w-3.5 shrink-0"><path d="M7 1Q13 1 13 5.500 13 8 10.500 9.200L11 13 7.500 10Q1 10 1 5.500 1 1 7 1Z" fill="#686868" /></svg>
        </footer>
      </main>

      {/* annotation frames and leader lines over the window */}
      <div className="absolute top-[130px] left-[589px] h-[646px] w-[798px] border-6 border-[#92d050]" />
      <div className="absolute top-[175px] left-[347px] h-[156px] w-[244px] border-6 border-[#ffc000]" />
      <div className="absolute top-[331px] left-[347px] h-[445px] w-[244px] border-6 border-[#7030a0]" />
      <svg viewBox="0 0 100 330" className="absolute top-[160px] left-[250px] h-[330px] w-[100px]" fill="none">
        <path d="M61.500 12.500L99 31.500" stroke="#ffc000" strokeWidth="5.500" />
        <path d="M6.500 325L99 287" stroke="#7030a0" strokeWidth="5.500" />
      </svg>
    </div>
  );
}
